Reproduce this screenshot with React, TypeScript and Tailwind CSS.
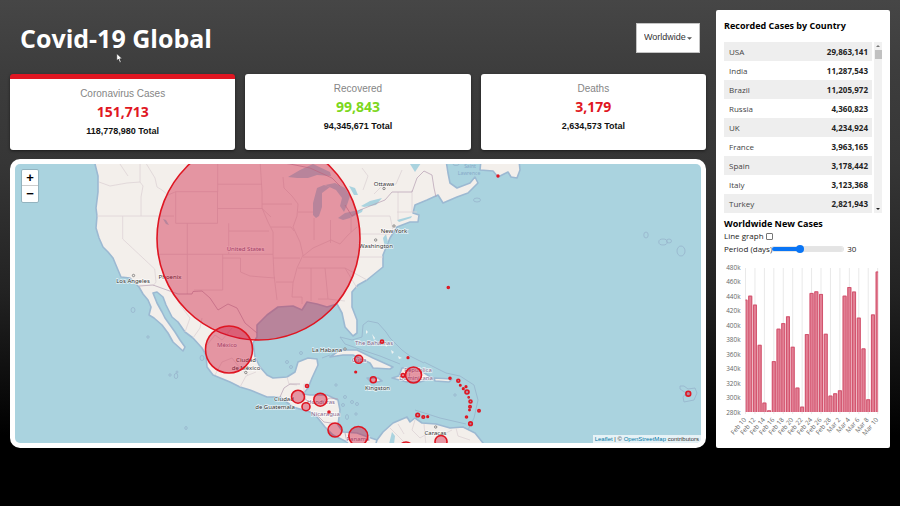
import { useState } from "react";

const SANS = "font-['Open_Sans','Noto_Sans',sans-serif]";

const countries: [string, string][] = [
  ["USA", "29,863,141"],
  ["India", "11,287,543"],
  ["Brazil", "11,205,972"],
  ["Russia", "4,360,823"],
  ["UK", "4,234,924"],
  ["France", "3,963,165"],
  ["Spain", "3,178,442"],
  ["Italy", "3,123,368"],
  ["Turkey", "2,821,943"],
];

// New cases per day, in thousands, Feb 10 to Mar 10
const daily = [
  435.5, 441, 428.6, 373, 293, 282.3, 350.4, 395.3, 403, 412.4, 370.3, 313.8, 287.4, 387.9, 444.8,
  447, 443.4, 388.3, 302.7, 305.9, 310, 441, 453, 446.7, 410.6, 368, 297.6, 415, 474.4,
];

const dayLabels = [
  "Feb 10", "Feb 12", "Feb 14", "Feb 16", "Feb 18", "Feb 20", "Feb 22", "Feb 24",
  "Feb 26", "Feb 28", "Mar 2", "Mar 4", "Mar 6", "Mar 8", "Mar 10",
];

const stats = [
  { title: "Coronavirus Cases", today: "151,713", total: "118,778,980", color: "text-[#e01622]", active: true },
  { title: "Recovered", today: "99,843", total: "94,345,671", color: "text-[#7dd71d]", active: false },
  { title: "Deaths", today: "3,179", total: "2,634,573", color: "text-[#e01622]", active: false },
];

const land = [
  // North and Central America
  "M94 160 L98 176 98 192 96 208 97 216 96 228 99 238 103 247 108 252 113 258 118 270 121 277 130 278 135 283 139 287 143 294 148 300 151 307 149 315 154 318 162 325 168 333 173 342 183 351 185 347 180 340 175 332 170 325 165 318 162 312 157 303 153 293 157 292 163 297 166 305 172 317 178 322 185 332 193 338 202 348 206 355 207 367 213 375 230 382 240 387 250 390 267 397 280 397 293 407 310 412 317 417 325 427 333 435 347 442 352 450 377 450 377 440 368 437 357 433 343 432 338 425 340 410 338 400 327 395 310 395 303 394 308 388 312 378 318 365 317 359 308 358 298 362 295 372 287 377 273 378 267 375 260 367 255 357 253 343 257 337 257 325 267 315 278 307 293 306 302 310 307 302 317 304 327 307 337 304 342 313 345 327 353 336 357 333 357 320 352 307 352 292 358 285 367 280 383 267 383 255 390 238 397 227 410 222 418 222 419 215 413 213 415 205 427 200 438 195 443 203 457 197 468 193 478 183 475 177 470 183 457 188 450 183 448 173 446 160 Z",
  // Newfoundland
  "M481 160 L480 170 493 171 498 177 508 172 511 177 517 178 520 170 519 160 Z",
  // South America
  "M374 450 L377 440 383 432 393 423 407 417 410 422 415 418 422 423 436 424 450 428 463 427 475 433 487 448 Z",
  // Greater Antilles
  "M330 357 L340 350 357 350 373 358 393 367 390 369 373 368 370 363 353 355 343 355 Z",
  "M392 378 L399 376 402 368 417 368 432 378 420 382 407 382 Z",
  "M434 378 L452 379 449 382 435 381 Z",
  "M367 378 L378 378 382 381 372 383 Z",
];

const lakes = [
  "M288 177 L300 170 313 164 330 172 331 176 317 175 308 178 297 178 Z",
  "M317 188 L313 203 313 215 316 218 319 216 322 207 322 193 330 187 324 185 Z",
  "M325 185 L335 183 345 188 350 196 347 205 344 212 340 206 342 198 336 190 Z",
  "M349 186 L355 188 358 195 354 195 Z",
  "M338 218 L345 213 363 209 362 212 350 218 343 220 Z",
  "M361 206 L370 201 382 198 376 205 364 207 Z",
  "M163 219 L166 220 169 225 166 224 Z",
  "M410 164 L418 160 423 160 415 172 Z",
  "M383 238 L386 234 388 242 385 248 Z",
  "M389 444 L392 432 395 436 394 444 Z",
];

const stateLines = [
  "M99 182 L110 186 127 183 140 182 140 160 M140 182 L143 186 141 197 141 216 M97 216 L174 216 M122.7 216 V239 L154.7 269 156 282 153 286 M144 160 L155 178 157 187 162 190 168 195 175.7 191.7",
  "M175.7 191.7 H217.5 V223.3 H175.7 Z M187.3 223.3 V294 M157 254.3 H273 M228.7 223.3 V254 M217.7 160 V192 M217.7 184.2 H262 M217.7 208.5 H262 L271 217 M229 231 H269",
  "M222.7 254 V290 H194 M222.7 258 H240.5 V272 L250 276 262 277 275 278",
  "M260 160 L262 192 262 208 268 222 273 232 273 254 274 275 277 300 M262 204 H292 M271 227 H291 L294 231",
  "M283 177 L284 188 292 196 298 204 297 216 293 227 300 242 303 255 297 268 293 283 292 297 H302 V304 M298 212 H313 M314 218 V240 M330.5 220 V243 M303 256 L313 248 322 244 331 240 340 244 348 235 357 227",
  "M303 257 H383 M298 268 H345 L367 280 M345 268 L357 288 M311 268 V301 M325 268 L328 299 H318 M328 299 L345 301 M273 258 H300 M276 282 H293 M351 213 V232 M357 216 H390 L393 230 M360 234 H390 M398 192 V220 M412 190 V212 M397 212 H417",
  "M185 332 L190 318 180 305 M193 338 L200 328 202 318 M207 345 L215 335 222 340 232 328 M215 375 L222 362 232 358 240 368 248 375 M240 387 L246 376 256 372 M287 377 L289 384 297 385 M304 394 L304 384 308 384",
  "M390 428 L400 438 408 446 M415 420 L412 430 420 438 430 432 440 436 452 430 M398 424 L404 434 M424 424 L426 446 M456 428 L458 436 470 440",
  "M363 190 L368 176 362 168 M374 194 L382 186 396 184 402 170 M120 164 L128 176",
];

const countryLines = [
  "M139 286 L153 285 178 294 192 294 193 291.5 202 291 210 298 218 310 228 304 237 308 245 323 257 333",
  "M262 160 L290 164 310 168 332 178 340 186 M345 205 L352 216 360 210 375 204 385 200 392 192 H412 L417 178 424 171 432 175 434 188 436 197",
  "M280 397 L284 388 290 384 300 384 M303 394 L306 400 316 404 330 398 338 399 M316 414 L324 422 338 424 M347 442 L345 433 M410 368 L409 382",
];

const waterLines = [
  "M340 337 L352 340 362 337 363 325 368 321 378 323 386 332 390 338 402 350 410 356 424 363 M340 337 L345 344 368 352 380 356 400 364",
  "M424 362 L446 373 460 376 474 385 478 400 474 418 468 430 M330 355 L322 358 M415 410 L440 418 466 424",
];

const islets: [number, number, number, number][] = [
  [133, 310, 2, 2.5], [148, 337, 1.2, 1.2], [170, 375, 1.2, 1.2], [176, 376, 1.8, 2.6], [177, 372, 1, 1], [186, 428, 1.2, 1.5],
  [202, 358, 2, 2.5], [287, 362, 1.5, 1.5], [301, 353, 1.5, 1.5], [291, 367, 1.5, 1.5], [336, 385, 1.2, 1.2], [345, 397, 1.5, 1.5],
  [352, 402, 1.5, 1.5], [357, 404, 1.5, 1.5], [343, 405, 1.5, 1.5], [347, 417, 1.5, 2.5], [356, 414, 1.2, 1.2], [455, 395, 1.2, 1.2],
  [477, 200, 3.5, 2], [646, 235, 2.2, 3], [663, 242, 4.2, 3], [669, 241, 2.5, 2], [681, 251, 4, 5], [456, 164, 3, 1.5],
];

const outbreaks: [number, number, number][] = [
  [258.5, 238.5, 101.5], [229, 349.5, 23.5], [298, 396.7, 6.5], [306, 406.7, 4], [307, 386, 1.5], [320.3, 399.7, 6.5],
  [329, 412, 1], [335, 430, 7], [358.3, 436, 9.5], [358.7, 359.3, 4], [355.7, 372, 0.8], [373.3, 379.7, 3], [382, 341.7, 1.6],
  [408, 357.7, 0.8], [403, 375.3, 1.8], [413.5, 375, 8], [450, 378.3, 1], [417.7, 415, 1.8], [423.3, 417, 1.3], [427.7, 416.7, 0.8],
  [441, 441.5, 6], [406, 449, 7], [448.3, 287.5, 1], [498, 176, 0.9], [688.3, 393.7, 2.4], [458.3, 380.7, 1.5], [460.3, 385.3, 0.7],
  [463.3, 388.7, 0.8], [466, 386.7, 0.8], [467, 392, 2], [468.7, 397.3, 0.6], [470.5, 401.5, 1.5], [470, 406.7, 1.2],
  [469.5, 410, 0.7], [479, 410.7, 1.2], [466.5, 417, 1], [470.5, 423.7, 1.8],
];

const places: [string, number, number, string?][] = [
  ["Ottawa", 384, 185.5], ["New York", 394, 232.5], ["Washington", 376, 248], ["Los Angeles", 133, 282.5], ["Phoenix", 170, 278.5],
  ["United States", 245.5, 250.5, "c"], ["México", 227, 347, "c"], ["Ciudad", 246, 362], ["de México", 246, 370],
  ["Ciudad", 284, 401], ["de Guatemala", 275, 409], ["Honduras", 321, 403.5, "c"], ["Nicaragua", 325.5, 415.5, "c"],
  ["La Habana", 327, 352], ["Cuba", 359, 362, "c"], ["The Bahamas", 374, 345, "c"], ["Kingston", 377.5, 389.5],
  ["República", 418, 372, "c"], ["Dominicana", 416, 380, "c"], ["Panamá", 358, 441, "c"], ["Caracas", 435.5, 434.5],
];

const cityDots: [number, number][] = [[384, 188.5], [375.7, 240], [345, 349], [435.7, 427], [245.8, 372.5], [133.5, 275.5], [394, 226]];

function WorldMap() {
  return (
    <svg
      className="block h-full w-full bg-[#aad3df]"
      viewBox="15 164 686 279"
      preserveAspectRatio="xMidYMid slice"
      role="img"
      aria-label="Map of cases"
    >
      <g fill="#f3efeb" stroke="#9cb9d2" strokeWidth="1.6" strokeLinejoin="round">
        {land.map((d) => <path key={d} d={d} />)}
      </g>
      <g fill="#aad3df">
        {lakes.map((d) => <path key={d} d={d} />)}
        <path d="M397 220 L412 216 411 218 399 222 Z" />
      </g>
      <g fill="none" stroke="#ddd3d5" strokeWidth="0.8" strokeLinejoin="round">
        {stateLines.map((d) => <path key={d} d={d} />)}
      </g>
      <g fill="none" stroke="#b49db2" strokeWidth="0.7" strokeLinejoin="round">
        {countryLines.map((d) => <path key={d} d={d} />)}
      </g>
      <g fill="none" stroke="#97b4cc" strokeWidth="0.8">
        {waterLines.map((d) => <path key={d} d={d} />)}
        <path d="M680 386 L684 386 688 389 695 388 697 393 694 400 684 402 683 397 686 393 680 389 Z" />
        {islets.map(([x, y, rx, ry]) => <ellipse key={x + "-" + y} cx={x} cy={y} rx={rx} ry={ry} />)}
      </g>
      <g fill="#eef3f2">
        <path d="M372 334 L375 338 374 340 Z M366 330 L368 332 366 334 Z M384 341 L388 345 386 347 Z M391 350 L394 352 392 354 Z M398 356 L402 358 399 359 Z" />
      </g>
      <g fontFamily="'Noto Sans', sans-serif" fontSize="6" textAnchor="middle" stroke="#ffffff" strokeOpacity="0.7" strokeWidth="1.4" paintOrder="stroke">
        {places.map(([name, x, y, kind]) => (
          <text key={name + x} x={x} y={y} fill={kind ? "#84668a" : "#333333"}>{name}</text>
        ))}
        <text x="470" y="168" fontSize="5" fill="#86a9c8" stroke="none">Saint</text>
        <text x="469" y="175" fontSize="5" fill="#86a9c8" stroke="none">Lawrence</text>
      </g>
      <g fill="#f3efeb" stroke="#666666" strokeWidth="0.7">
        {cityDots.map(([x, y]) => <circle key={x} cx={x} cy={y} r="1.2" />)}
      </g>
      <g fill="#cc1034" fillOpacity="0.4" stroke="#df1622" strokeWidth="1.6">
        {outbreaks.map(([x, y, r]) => <circle key={x + "-" + y} cx={x} cy={y} r={r} />)}
      </g>
    </svg>
  );
}

function CasesChart({ line }: { line: boolean }) {
  const left = 21.5;
  const bottom = 149;
  const step = 4.72;
  const top = (v: number) => bottom - ((v - 280) / 200) * 144.5;
  return (
    <svg className="mt-[6px] block w-full" viewBox="0 0 158 180" role="img" aria-label="Worldwide new cases per day">
      <defs>
        <clipPath id="plot"><rect x={left} y="4" width="132.6" height="146" /></clipPath>
      </defs>
      <g stroke="#e9e9e9" strokeWidth="1">
        {dayLabels.map((d, i) => (
          <line key={d} x1={left + i * step * 2} x2={left + i * step * 2} y1="5" y2={bottom + 2} />
        ))}
      </g>
      <g clipPath="url(#plot)">
        {line ? (
          <polyline fill="none" stroke="#cc1034" points={daily.map((v, i) => `${left + i * step},${top(v)}`).join(" ")} />
        ) : (
          daily.map((v, i) => {
            const x = left + i * step - 2;
            return (
              <g key={i}>
                <rect x={x} y={top(v)} width="4" height={bottom - top(v)} fill="#e27f94" />
                <path d={`M${x + 0.5} ${bottom} V${top(v) + 0.5} H${x + 3.5} V${bottom}`} fill="none" stroke="#d2546e" strokeWidth="1" />
              </g>
            );
          })
        )}
      </g>
      <g fontFamily="'Open Sans', 'Noto Sans', sans-serif" fontSize="6.4" fill="#666666" textAnchor="end">
        {Array.from({ length: 11 }, (_, i) => (
          <text key={i} x="16.5" y={7 + i * 14.45}>{480 - i * 20}k</text>
        ))}
        {dayLabels.map((d, i) => {
          const x = left + i * step * 2 + 1;
          return <text key={d} x={x} y="157" transform={`rotate(-50 ${x} 157)`}>{d}</text>;
        })}
      </g>
    </svg>
  );
}

export default function App() {
  const [days, setDays] = useState(30);
  const [line, setLine] = useState(false);
  const fill = ((days - 7) / 60) * 100;

  return (
    <div className="relative min-h-screen bg-black bg-[linear-gradient(to_bottom,#464646_0%,#3d3d3d_14%,#363636_32%,#222222_58%,#000000_86%)] font-['Liberation_Sans',Arial,sans-serif]">
      <div className="flex gap-[10px] p-[10px]">
        <main className="min-w-0 flex-1">
          <header className="mb-2 flex h-14 items-center justify-between pr-[6px] pl-[10px]">
            <h1 className={`text-[25px] leading-8 font-bold text-white ${SANS}`}>Covid-19 Global</h1>
            <div className="relative">
              <select
                aria-label="Region"
                defaultValue="Worldwide"
                className="block h-[30px] w-16 appearance-none border border-[#c4c4c4] bg-white pl-[7px] text-[9px] text-[#333]"
              >
                <option>Worldwide</option>
                {countries.map(([name]) => <option key={name}>{name}</option>)}
              </select>
              <svg className="pointer-events-none absolute top-[14px] right-2 h-[3px] w-[5px]" viewBox="0 0 6 3" aria-hidden="true">
                <path d="M0 0h6L3 3z" fill="#555" />
              </svg>
            </div>
          </header>

          <section className="grid grid-cols-3 gap-[10px] text-center">
            {stats.map((s) => (
              <article
                key={s.title}
                className={`h-[76px] rounded-[3px] bg-white pt-[7px] shadow-[0_1px_3px_rgba(0,0,0,0.5)] ${s.active ? "border-t-[5px] border-[#e01622]" : ""}`}
              >
                <h2 className="text-[10px] leading-4 text-[#858585]">{s.title}</h2>
                <p className={`text-[14px] leading-5 font-bold ${s.color} ${SANS}`}>{s.today}</p>
                <p className="text-[9px] leading-[18px] font-bold text-[#111]">{s.total} Total</p>
              </article>
            ))}
          </section>

          <section className="relative mt-[9px] h-[289px] overflow-hidden rounded-[10px] border-[5px] border-white bg-white">
            <WorldMap />
            <div className="absolute top-[5px] left-[6px] flex w-[18px] flex-col overflow-hidden rounded-[2px] border border-[#93b3bf] bg-white text-center text-[13px] font-bold text-black">
              <button type="button" aria-label="Zoom in" className="h-4 border-b border-[#cccccc] leading-4">+</button>
              <button type="button" aria-label="Zoom out" className="h-4 leading-4">−</button>
            </div>
            <p className="absolute right-0 bottom-0 bg-white/70 px-[2px] text-[6px] leading-2 text-[#333]">
              <a href="#leaflet" className="text-[#0078a8]">Leaflet</a> | © <a href="#osm" className="text-[#0078a8]">OpenStreetMap</a> contributors
            </p>
          </section>
        </main>

        <aside className={`w-[174px] shrink-0 rounded-[2px] bg-white px-2 pt-2 text-[#222] ${SANS}`}>
          <h2 className="text-[9px] leading-4 font-bold text-black">Recorded Cases by Country</h2>
          <div className="mt-2 flex h-[171px] gap-[2px]">
            <div className="min-w-0 flex-1 overflow-hidden">
              <table className="w-full text-[8px] leading-[19px]">
                <tbody>
                  {countries.map(([name, cases]) => (
                    <tr key={name} className="h-[19px] odd:bg-[#eeeeee]">
                      <th scope="row" className="p-0 pl-[5px] text-left font-normal text-[#444]">{name}</th>
                      <td className="p-0 pr-1 text-right font-bold text-[#222]">{cases}</td>
                    </tr>
                  ))}
                </tbody>
              </table>
            </div>
            <div className="flex w-2 flex-col items-center justify-between bg-[#f1f1f1] py-[3px]" aria-hidden="true">
              <div className="flex flex-col items-center gap-[3px]">
                <svg className="h-[2px] w-1" viewBox="0 0 4 2"><path d="M0 2h4L2 0z" fill="#777" /></svg>
                <div className="h-[9px] w-[7px] bg-[#c1c1c1]" />
              </div>
              <svg className="h-[2px] w-1" viewBox="0 0 4 2"><path d="M0 0h4L2 2z" fill="#222" /></svg>
            </div>
          </div>

          <h2 className="mt-[3px] text-[9px] leading-4 font-bold text-black">Worldwide New Cases</h2>
          <div className="flex items-center gap-[2px] text-[8px] leading-2">
            <label htmlFor="line">Line graph</label>
            <input
              id="line"
              type="checkbox"
              checked={line}
              onChange={(e) => setLine(e.target.checked)}
              className="h-[7px] w-[7px] appearance-none rounded-[1px] border border-[#767676] bg-white checked:bg-[#0075ff]"
            />
          </div>
          <div className="mt-px flex items-center text-[8px] leading-4">
            <label htmlFor="days" className="whitespace-nowrap">Period (days)</label>
            <input
              id="days"
              type="range"
              min={7}
              max={67}
              value={days}
              onChange={(e) => setDays(Number(e.target.value))}
              style={{ backgroundImage: `linear-gradient(to right, #0a75f5 ${fill}%, #e4e4e4 ${fill}%)` }}
              className="h-1 w-[71px] appearance-none rounded-full ring-1 ring-[#d4d4d4]/60 [&::-webkit-slider-thumb]:h-2 [&::-webkit-slider-thumb]:w-2 [&::-webkit-slider-thumb]:appearance-none [&::-webkit-slider-thumb]:rounded-full [&::-webkit-slider-thumb]:bg-[#0a75f5]"
            />
            <output htmlFor="days" className="ml-1">{days}</output>
          </div>
          <CasesChart line={line} />
        </aside>
      </div>

      <svg className="pointer-events-none absolute top-[53px] left-[116px] h-[10px] w-[7px]" viewBox="0 0 12 18" aria-hidden="true">
        <path d="M1 1 L1 14 L4 11 L6.500 17 L9 16 L6.500 10.500 L11 10.500 Z" fill="#fff" stroke="#222" strokeWidth="1" />
      </svg>
    </div>
  );
}
